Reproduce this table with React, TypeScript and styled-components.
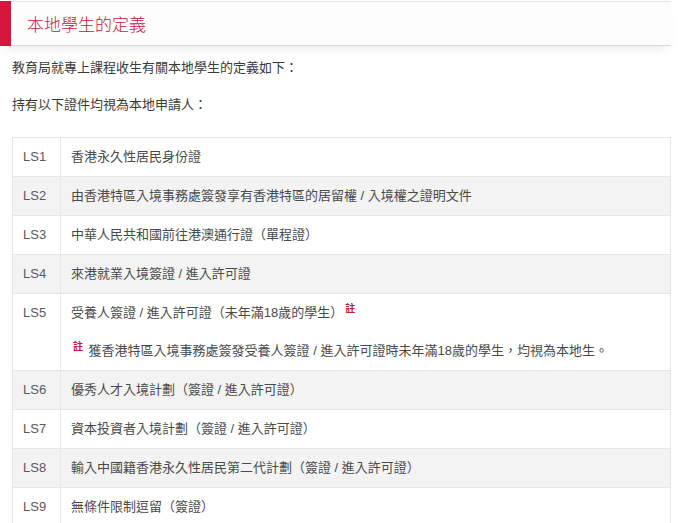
import styled, { createGlobalStyle } from "styled-components";

const GlobalStyle = createGlobalStyle`
  body {
    margin: 0;
    background: #ffffff;
    font-family: "Liberation Sans", "Noto Sans CJK TC", sans-serif;
    color: #444;
  }
`;

const Page = styled.div`
  width: 671px;
  padding-top: 1px;
`;

const Header = styled.div`
  display: flex;
  height: 45px;
  box-shadow: 0 8px 10px -5px rgba(0, 0, 0, 0.09);
`;

const RedBar = styled.div`
  width: 11px;
  background: #d4173b;
`;

const TitleBox = styled.div`
  flex: 1;
  display: flex;
  align-items: center;
  padding-left: 16px;
  border-top: 1px solid #e6e6e6;
  border-bottom: 1px solid #dadada;
  background: #fdfdfd;
  color: #c8163a;
  font-size: 17px;
  font-weight: 300;
`;

const Content = styled.div`
  padding: 12px 0 0 12px;
`;

const Para = styled.p`
  margin: 0 0 17px;
  font-size: 13px;
  line-height: 20px;
  color: #3a3a3a;
`;

const Table = styled.table`
  width: 100%;
  margin-top: 22px;
  border-collapse: collapse;
  border: 1px solid #e6e6e6;
  font-size: 13px;
  line-height: 18px;
`;

const Row = styled.tr<{ $shade: boolean }>`
  background: ${(p) => (p.$shade ? "#f3f3f3" : "#ffffff")};
  border-top: 1px solid #e6e6e6;
`;

const Code = styled.td`
  width: 27px;
  padding: 10px 10px;
  vertical-align: top;
  color: #5a5a5a;
  border-right: 1px solid #e8e8e8;
`;

const Desc = styled.td`
  padding: 10px 10px;
  vertical-align: top;
  color: #4a4a4a;
`;

const Note = styled.div`
  margin-top: 20px;
`;

const Mark = styled.sup`
  color: #c8163a;
  font-size: 10px;
  font-weight: bold;
  vertical-align: 5px;
  line-height: 0;
  margin: 0 2px;
`;

const rows = [
  "香港永久性居民身份證",
  "由香港特區入境事務處簽發享有香港特區的居留權 / 入境權之證明文件",
  "中華人民共和國前往港澳通行證（單程證）",
  "來港就業入境簽證 / 進入許可證",
  "受養人簽證 / 進入許可證（未年滿18歲的學生）",
  "優秀人才入境計劃（簽證 / 進入許可證）",
  "資本投資者入境計劃（簽證 / 進入許可證）",
  "輸入中國籍香港永久性居民第二代計劃（簽證 / 進入許可證）",
  "無條件限制逗留（簽證）",
];

export default function App() {
  return (
    <Page>
      <GlobalStyle />
      <Header>
        <RedBar />
        <TitleBox>本地學生的定義</TitleBox>
      </Header>
      <Content>
        <Para>教育局就專上課程收生有關本地學生的定義如下：</Para>
        <Para>持有以下證件均視為本地申請人：</Para>
        <Table>
          <tbody>
            {rows.map((text, i) => (
              <Row key={i} $shade={i % 2 === 1}>
                <Code>LS{i + 1}</Code>
                <Desc>
                  {text}
                  {i === 4 && (
                    <>
                      <Mark>註</Mark>
                      <Note>
                        <Mark>註</Mark> 獲香港特區入境事務處簽發受養人簽證 / 進入許可證時未年滿18歲的學生，均視為本地生。
                      </Note>
                    </>
                  )}
                </Desc>
              </Row>
            ))}
          </tbody>
        </Table>
      </Content>
    </Page>
  );
}
